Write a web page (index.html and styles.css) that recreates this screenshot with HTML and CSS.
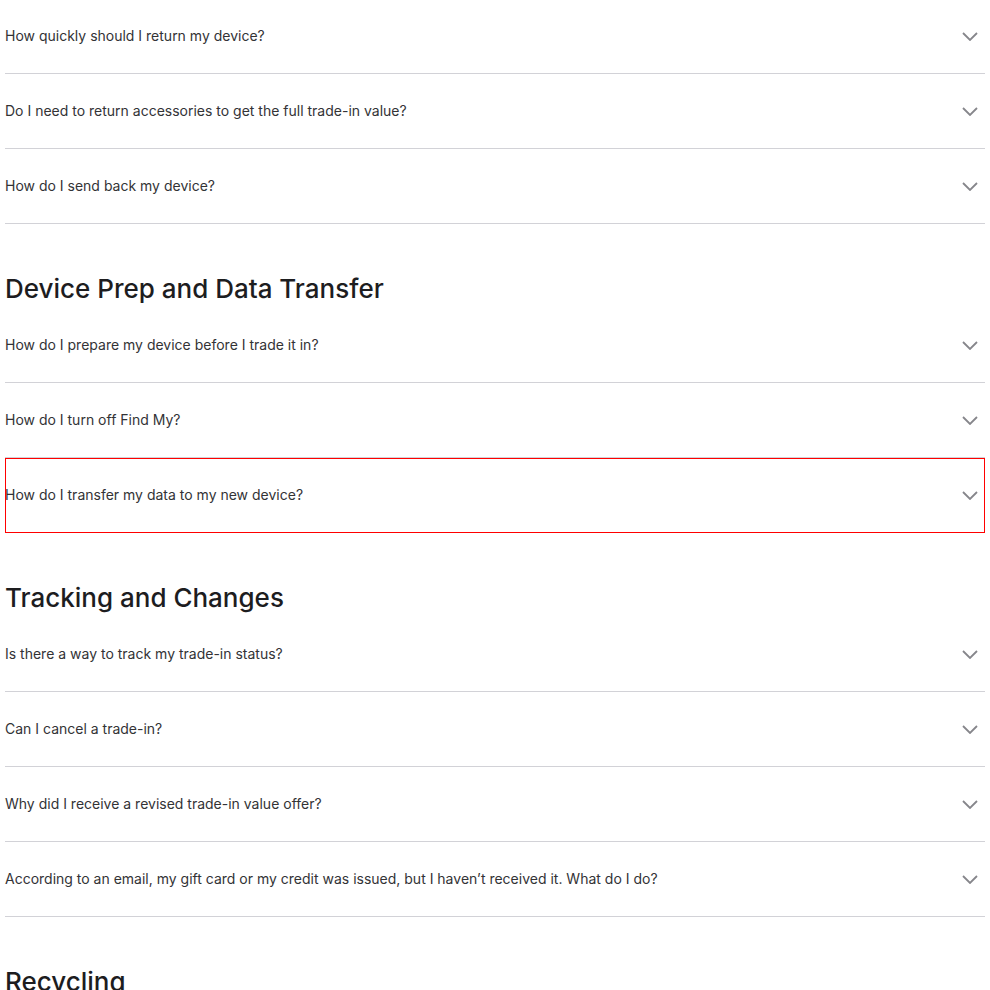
FILE: index.html
```html
<!DOCTYPE html>
<html lang="en">
<head>
<meta charset="utf-8">
<link rel="stylesheet" href="styles.css">
</head>
<body>
<div class="page">
  <ul class="faq">
    <li class="row"><span class="q">How quickly should I return my device?</span><svg class="chev" viewBox="0 0 16 9"><path d="M1 1l7 7 7-7"/></svg></li>
    <li class="row"><span class="q">Do I need to return accessories to get the full trade-in value?</span><svg class="chev" viewBox="0 0 16 9"><path d="M1 1l7 7 7-7"/></svg></li>
    <li class="row"><span class="q">How do I send back my device?</span><svg class="chev" viewBox="0 0 16 9"><path d="M1 1l7 7 7-7"/></svg></li>
  </ul>
  <h2 class="section">Device Prep and Data Transfer</h2>
  <ul class="faq">
    <li class="row"><span class="q">How do I prepare my device before I trade it in?</span><svg class="chev" viewBox="0 0 16 9"><path d="M1 1l7 7 7-7"/></svg></li>
    <li class="row"><span class="q">How do I turn off Find My?</span><svg class="chev" viewBox="0 0 16 9"><path d="M1 1l7 7 7-7"/></svg></li>
    <li class="row focused"><span class="q">How do I transfer my data to my new device?</span><svg class="chev" viewBox="0 0 16 9"><path d="M1 1l7 7 7-7"/></svg></li>
  </ul>
  <h2 class="section">Tracking and Changes</h2>
  <ul class="faq">
    <li class="row"><span class="q">Is there a way to track my trade-in status?</span><svg class="chev" viewBox="0 0 16 9"><path d="M1 1l7 7 7-7"/></svg></li>
    <li class="row"><span class="q">Can I cancel a trade-in?</span><svg class="chev" viewBox="0 0 16 9"><path d="M1 1l7 7 7-7"/></svg></li>
    <li class="row"><span class="q">Why did I receive a revised trade-in value offer?</span><svg class="chev" viewBox="0 0 16 9"><path d="M1 1l7 7 7-7"/></svg></li>
    <li class="row"><span class="q">According to an email, my gift card or my credit was issued, but I haven’t received it. What do I do?</span><svg class="chev" viewBox="0 0 16 9"><path d="M1 1l7 7 7-7"/></svg></li>
  </ul>
  <h2 class="section">Recycling</h2>
</div>
</body>
</html>
```
FILE: styles.css
```css
html, body {
  margin: 0;
  padding: 0;
  background: #fff;
}
body {
  font-family: Inter, "Liberation Sans", sans-serif;
  color: #1d1d1f;
  overflow: hidden;
}
.page {
  margin: -1px 5px 0 5px;
}
.faq {
  list-style: none;
  margin: 0;
  padding: 0;
}
.row {
  height: 74px;
  border-bottom: 1px solid #d2d2d7;
  display: flex;
  align-items: center;
  justify-content: space-between;
  font-size: 14px;
  color: #333336;
}
.row.focused {
  outline: 1px solid #ff0000;
  outline-offset: -1px;
}
.q {
  line-height: 20px;
}
.chev {
  width: 16px;
  height: 9px;
  margin-right: 7px;
  fill: none;
  stroke: #86868b;
  stroke-width: 1.8;
}
.section {
  margin: 0;
  padding: 48px 0 2px;
  font-size: 26px;
  line-height: 34px;
  font-weight: 500;
  color: #1d1d1f;
}
```
